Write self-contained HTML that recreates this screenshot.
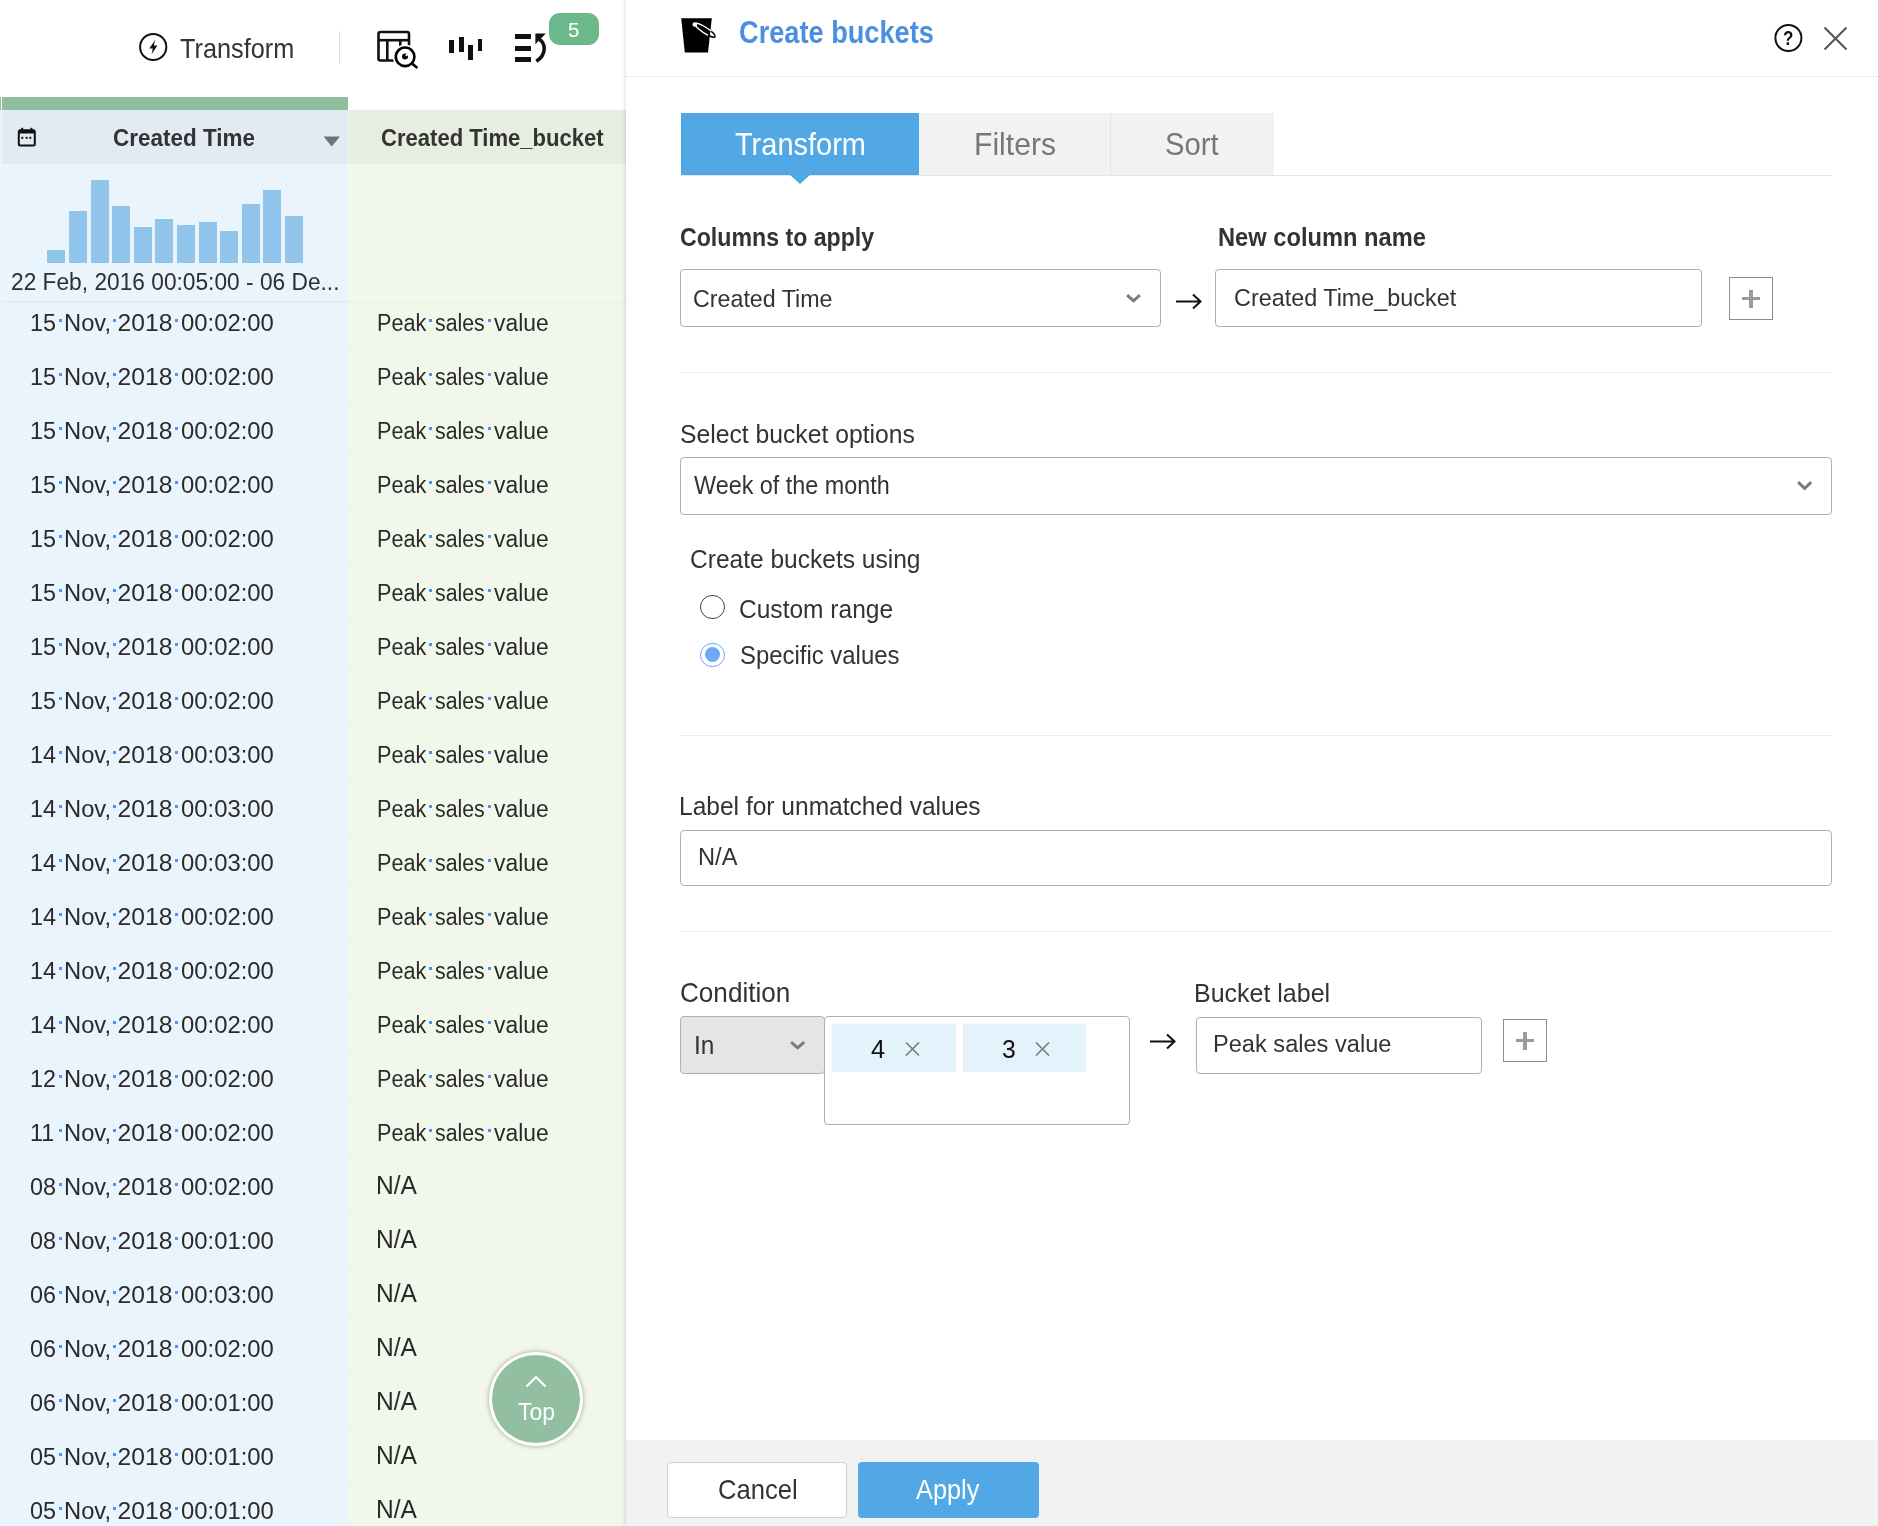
<!DOCTYPE html>
<html><head><meta charset="utf-8"><title>Create buckets</title>
<style>
html,body{margin:0;padding:0;width:1878px;height:1526px;overflow:hidden;background:#fff;position:relative;font-family:"Liberation Sans",sans-serif}
.t{position:absolute;white-space:pre;line-height:1;transform-origin:0 0}
</style></head><body>
<div style="position:absolute;left:0px;top:0px;width:626px;height:97px;background:#fff"></div>
<div style="position:absolute;left:0px;top:97px;width:2px;height:1429px;background:#f2f2f2"></div>
<div style="position:absolute;left:0px;top:97px;width:1px;height:13px;background:#8fbf9f"></div>
<div style="position:absolute;left:1px;top:97px;width:1px;height:13px;background:#fff"></div>
<div style="position:absolute;left:2px;top:97px;width:346px;height:13px;background:#8fbf9f"></div>
<div style="position:absolute;left:2px;top:110px;width:346px;height:54px;background:#e2ebf4"></div>
<div style="position:absolute;left:348px;top:110px;width:1px;height:1416px;background:#f3f5f3"></div>
<div style="position:absolute;left:349px;top:110px;width:277px;height:54px;background:#e7eddf"></div>
<div style="position:absolute;left:2px;top:164px;width:346px;height:1362px;background:#eaf4fd"></div>
<div style="position:absolute;left:349px;top:164px;width:277px;height:1362px;background:#f1f7ea"></div>
<div style="position:absolute;left:339px;top:31px;width:1px;height:33px;background:#dedede"></div>
<div style="position:absolute;left:47px;top:250px;width:18px;height:12.5px;background:#92c5ec"></div>
<div style="position:absolute;left:69px;top:211px;width:18px;height:51.5px;background:#92c5ec"></div>
<div style="position:absolute;left:91px;top:180px;width:18px;height:82.5px;background:#92c5ec"></div>
<div style="position:absolute;left:112px;top:206px;width:18px;height:56.5px;background:#92c5ec"></div>
<div style="position:absolute;left:134px;top:227px;width:18px;height:35.5px;background:#92c5ec"></div>
<div style="position:absolute;left:155px;top:219px;width:18px;height:43.5px;background:#92c5ec"></div>
<div style="position:absolute;left:177px;top:225px;width:18px;height:37.5px;background:#92c5ec"></div>
<div style="position:absolute;left:199px;top:222px;width:18px;height:40.5px;background:#92c5ec"></div>
<div style="position:absolute;left:220px;top:231px;width:18px;height:31.5px;background:#92c5ec"></div>
<div style="position:absolute;left:242px;top:204px;width:18px;height:58.5px;background:#92c5ec"></div>
<div style="position:absolute;left:263px;top:190px;width:18px;height:72.5px;background:#92c5ec"></div>
<div style="position:absolute;left:285px;top:216px;width:18px;height:46.5px;background:#92c5ec"></div>
<div style="position:absolute;left:2px;top:301px;width:346px;height:1px;background:#dde7f0"></div>
<div style="position:absolute;left:349px;top:302px;width:277px;height:1px;background:#ebedea"></div>
<div style="position:absolute;left:2px;top:346px;width:624px;height:1px;background:#f0f1f1"></div>
<div style="position:absolute;left:59px;top:318.8px;width:3px;height:3.0px;background:#4b93f2"></div>
<div style="position:absolute;left:112.5px;top:318.8px;width:3.0px;height:3.0px;background:#4b93f2"></div>
<div style="position:absolute;left:175px;top:318.8px;width:3px;height:3.0px;background:#4b93f2"></div>
<div style="position:absolute;left:429.2px;top:319.2px;width:3.0px;height:3.0px;background:#4b93f2"></div>
<div style="position:absolute;left:488px;top:319.2px;width:3px;height:3.0px;background:#4b93f2"></div>
<div style="position:absolute;left:2px;top:400px;width:624px;height:1px;background:#f0f1f1"></div>
<div style="position:absolute;left:59px;top:372.8px;width:3px;height:3.0px;background:#4b93f2"></div>
<div style="position:absolute;left:112.5px;top:372.8px;width:3.0px;height:3.0px;background:#4b93f2"></div>
<div style="position:absolute;left:175px;top:372.8px;width:3px;height:3.0px;background:#4b93f2"></div>
<div style="position:absolute;left:429.2px;top:373.2px;width:3.0px;height:3.0px;background:#4b93f2"></div>
<div style="position:absolute;left:488px;top:373.2px;width:3px;height:3.0px;background:#4b93f2"></div>
<div style="position:absolute;left:2px;top:454px;width:624px;height:1px;background:#f0f1f1"></div>
<div style="position:absolute;left:59px;top:426.8px;width:3px;height:3.0px;background:#4b93f2"></div>
<div style="position:absolute;left:112.5px;top:426.8px;width:3.0px;height:3.0px;background:#4b93f2"></div>
<div style="position:absolute;left:175px;top:426.8px;width:3px;height:3.0px;background:#4b93f2"></div>
<div style="position:absolute;left:429.2px;top:427.2px;width:3.0px;height:3.0px;background:#4b93f2"></div>
<div style="position:absolute;left:488px;top:427.2px;width:3px;height:3.0px;background:#4b93f2"></div>
<div style="position:absolute;left:2px;top:508px;width:624px;height:1px;background:#f0f1f1"></div>
<div style="position:absolute;left:59px;top:480.8px;width:3px;height:3.0px;background:#4b93f2"></div>
<div style="position:absolute;left:112.5px;top:480.8px;width:3.0px;height:3.0px;background:#4b93f2"></div>
<div style="position:absolute;left:175px;top:480.8px;width:3px;height:3.0px;background:#4b93f2"></div>
<div style="position:absolute;left:429.2px;top:481.2px;width:3.0px;height:3.0px;background:#4b93f2"></div>
<div style="position:absolute;left:488px;top:481.2px;width:3px;height:3.0px;background:#4b93f2"></div>
<div style="position:absolute;left:2px;top:562px;width:624px;height:1px;background:#f0f1f1"></div>
<div style="position:absolute;left:59px;top:534.8px;width:3px;height:3.0px;background:#4b93f2"></div>
<div style="position:absolute;left:112.5px;top:534.8px;width:3.0px;height:3.0px;background:#4b93f2"></div>
<div style="position:absolute;left:175px;top:534.8px;width:3px;height:3.0px;background:#4b93f2"></div>
<div style="position:absolute;left:429.2px;top:535.1999999999999px;width:3.0px;height:3.0px;background:#4b93f2"></div>
<div style="position:absolute;left:488px;top:535.1999999999999px;width:3px;height:3.0px;background:#4b93f2"></div>
<div style="position:absolute;left:2px;top:616px;width:624px;height:1px;background:#f0f1f1"></div>
<div style="position:absolute;left:59px;top:588.8px;width:3px;height:3.0px;background:#4b93f2"></div>
<div style="position:absolute;left:112.5px;top:588.8px;width:3.0px;height:3.0px;background:#4b93f2"></div>
<div style="position:absolute;left:175px;top:588.8px;width:3px;height:3.0px;background:#4b93f2"></div>
<div style="position:absolute;left:429.2px;top:589.1999999999999px;width:3.0px;height:3.0px;background:#4b93f2"></div>
<div style="position:absolute;left:488px;top:589.1999999999999px;width:3px;height:3.0px;background:#4b93f2"></div>
<div style="position:absolute;left:2px;top:670px;width:624px;height:1px;background:#f0f1f1"></div>
<div style="position:absolute;left:59px;top:642.8px;width:3px;height:3.0px;background:#4b93f2"></div>
<div style="position:absolute;left:112.5px;top:642.8px;width:3.0px;height:3.0px;background:#4b93f2"></div>
<div style="position:absolute;left:175px;top:642.8px;width:3px;height:3.0px;background:#4b93f2"></div>
<div style="position:absolute;left:429.2px;top:643.1999999999999px;width:3.0px;height:3.0px;background:#4b93f2"></div>
<div style="position:absolute;left:488px;top:643.1999999999999px;width:3px;height:3.0px;background:#4b93f2"></div>
<div style="position:absolute;left:2px;top:724px;width:624px;height:1px;background:#f0f1f1"></div>
<div style="position:absolute;left:59px;top:696.8px;width:3px;height:3.0px;background:#4b93f2"></div>
<div style="position:absolute;left:112.5px;top:696.8px;width:3.0px;height:3.0px;background:#4b93f2"></div>
<div style="position:absolute;left:175px;top:696.8px;width:3px;height:3.0px;background:#4b93f2"></div>
<div style="position:absolute;left:429.2px;top:697.1999999999999px;width:3.0px;height:3.0px;background:#4b93f2"></div>
<div style="position:absolute;left:488px;top:697.1999999999999px;width:3px;height:3.0px;background:#4b93f2"></div>
<div style="position:absolute;left:2px;top:778px;width:624px;height:1px;background:#f0f1f1"></div>
<div style="position:absolute;left:59px;top:750.8px;width:3px;height:3.0px;background:#4b93f2"></div>
<div style="position:absolute;left:112.5px;top:750.8px;width:3.0px;height:3.0px;background:#4b93f2"></div>
<div style="position:absolute;left:175px;top:750.8px;width:3px;height:3.0px;background:#4b93f2"></div>
<div style="position:absolute;left:429.2px;top:751.1999999999999px;width:3.0px;height:3.0px;background:#4b93f2"></div>
<div style="position:absolute;left:488px;top:751.1999999999999px;width:3px;height:3.0px;background:#4b93f2"></div>
<div style="position:absolute;left:2px;top:832px;width:624px;height:1px;background:#f0f1f1"></div>
<div style="position:absolute;left:59px;top:804.8px;width:3px;height:3.0px;background:#4b93f2"></div>
<div style="position:absolute;left:112.5px;top:804.8px;width:3.0px;height:3.0px;background:#4b93f2"></div>
<div style="position:absolute;left:175px;top:804.8px;width:3px;height:3.0px;background:#4b93f2"></div>
<div style="position:absolute;left:429.2px;top:805.1999999999999px;width:3.0px;height:3.0px;background:#4b93f2"></div>
<div style="position:absolute;left:488px;top:805.1999999999999px;width:3px;height:3.0px;background:#4b93f2"></div>
<div style="position:absolute;left:2px;top:886px;width:624px;height:1px;background:#f0f1f1"></div>
<div style="position:absolute;left:59px;top:858.8px;width:3px;height:3.0px;background:#4b93f2"></div>
<div style="position:absolute;left:112.5px;top:858.8px;width:3.0px;height:3.0px;background:#4b93f2"></div>
<div style="position:absolute;left:175px;top:858.8px;width:3px;height:3.0px;background:#4b93f2"></div>
<div style="position:absolute;left:429.2px;top:859.1999999999999px;width:3.0px;height:3.0px;background:#4b93f2"></div>
<div style="position:absolute;left:488px;top:859.1999999999999px;width:3px;height:3.0px;background:#4b93f2"></div>
<div style="position:absolute;left:2px;top:940px;width:624px;height:1px;background:#f0f1f1"></div>
<div style="position:absolute;left:59px;top:912.8px;width:3px;height:3.0px;background:#4b93f2"></div>
<div style="position:absolute;left:112.5px;top:912.8px;width:3.0px;height:3.0px;background:#4b93f2"></div>
<div style="position:absolute;left:175px;top:912.8px;width:3px;height:3.0px;background:#4b93f2"></div>
<div style="position:absolute;left:429.2px;top:913.1999999999999px;width:3.0px;height:3.0px;background:#4b93f2"></div>
<div style="position:absolute;left:488px;top:913.1999999999999px;width:3px;height:3.0px;background:#4b93f2"></div>
<div style="position:absolute;left:2px;top:994px;width:624px;height:1px;background:#f0f1f1"></div>
<div style="position:absolute;left:59px;top:966.8px;width:3px;height:3.0px;background:#4b93f2"></div>
<div style="position:absolute;left:112.5px;top:966.8px;width:3.0px;height:3.0px;background:#4b93f2"></div>
<div style="position:absolute;left:175px;top:966.8px;width:3px;height:3.0px;background:#4b93f2"></div>
<div style="position:absolute;left:429.2px;top:967.1999999999999px;width:3.0px;height:3.0px;background:#4b93f2"></div>
<div style="position:absolute;left:488px;top:967.1999999999999px;width:3px;height:3.0px;background:#4b93f2"></div>
<div style="position:absolute;left:2px;top:1048px;width:624px;height:1px;background:#f0f1f1"></div>
<div style="position:absolute;left:59px;top:1020.8px;width:3px;height:3.0px;background:#4b93f2"></div>
<div style="position:absolute;left:112.5px;top:1020.8px;width:3.0px;height:3.0px;background:#4b93f2"></div>
<div style="position:absolute;left:175px;top:1020.8px;width:3px;height:3.0px;background:#4b93f2"></div>
<div style="position:absolute;left:429.2px;top:1021.1999999999999px;width:3.0px;height:3.0000000000001137px;background:#4b93f2"></div>
<div style="position:absolute;left:488px;top:1021.1999999999999px;width:3px;height:3.0000000000001137px;background:#4b93f2"></div>
<div style="position:absolute;left:2px;top:1102px;width:624px;height:1px;background:#f0f1f1"></div>
<div style="position:absolute;left:59px;top:1074.8px;width:3px;height:3.0px;background:#4b93f2"></div>
<div style="position:absolute;left:112.5px;top:1074.8px;width:3.0px;height:3.0px;background:#4b93f2"></div>
<div style="position:absolute;left:175px;top:1074.8px;width:3px;height:3.0px;background:#4b93f2"></div>
<div style="position:absolute;left:429.2px;top:1075.2px;width:3.0px;height:3.0px;background:#4b93f2"></div>
<div style="position:absolute;left:488px;top:1075.2px;width:3px;height:3.0px;background:#4b93f2"></div>
<div style="position:absolute;left:2px;top:1156px;width:624px;height:1px;background:#f0f1f1"></div>
<div style="position:absolute;left:59px;top:1128.8px;width:3px;height:3.0px;background:#4b93f2"></div>
<div style="position:absolute;left:112.5px;top:1128.8px;width:3.0px;height:3.0px;background:#4b93f2"></div>
<div style="position:absolute;left:175px;top:1128.8px;width:3px;height:3.0px;background:#4b93f2"></div>
<div style="position:absolute;left:429.2px;top:1129.2px;width:3.0px;height:3.0px;background:#4b93f2"></div>
<div style="position:absolute;left:488px;top:1129.2px;width:3px;height:3.0px;background:#4b93f2"></div>
<div style="position:absolute;left:2px;top:1210px;width:624px;height:1px;background:#f0f1f1"></div>
<div style="position:absolute;left:59px;top:1182.8px;width:3px;height:3.0px;background:#4b93f2"></div>
<div style="position:absolute;left:112.5px;top:1182.8px;width:3.0px;height:3.0px;background:#4b93f2"></div>
<div style="position:absolute;left:175px;top:1182.8px;width:3px;height:3.0px;background:#4b93f2"></div>
<div style="position:absolute;left:2px;top:1264px;width:624px;height:1px;background:#f0f1f1"></div>
<div style="position:absolute;left:59px;top:1236.8px;width:3px;height:3.0px;background:#4b93f2"></div>
<div style="position:absolute;left:112.5px;top:1236.8px;width:3.0px;height:3.0px;background:#4b93f2"></div>
<div style="position:absolute;left:175px;top:1236.8px;width:3px;height:3.0px;background:#4b93f2"></div>
<div style="position:absolute;left:2px;top:1318px;width:624px;height:1px;background:#f0f1f1"></div>
<div style="position:absolute;left:59px;top:1290.8px;width:3px;height:3.0px;background:#4b93f2"></div>
<div style="position:absolute;left:112.5px;top:1290.8px;width:3.0px;height:3.0px;background:#4b93f2"></div>
<div style="position:absolute;left:175px;top:1290.8px;width:3px;height:3.0px;background:#4b93f2"></div>
<div style="position:absolute;left:2px;top:1372px;width:624px;height:1px;background:#f0f1f1"></div>
<div style="position:absolute;left:59px;top:1344.8px;width:3px;height:3.0px;background:#4b93f2"></div>
<div style="position:absolute;left:112.5px;top:1344.8px;width:3.0px;height:3.0px;background:#4b93f2"></div>
<div style="position:absolute;left:175px;top:1344.8px;width:3px;height:3.0px;background:#4b93f2"></div>
<div style="position:absolute;left:2px;top:1426px;width:624px;height:1px;background:#f0f1f1"></div>
<div style="position:absolute;left:59px;top:1398.8px;width:3px;height:3.0px;background:#4b93f2"></div>
<div style="position:absolute;left:112.5px;top:1398.8px;width:3.0px;height:3.0px;background:#4b93f2"></div>
<div style="position:absolute;left:175px;top:1398.8px;width:3px;height:3.0px;background:#4b93f2"></div>
<div style="position:absolute;left:2px;top:1480px;width:624px;height:1px;background:#f0f1f1"></div>
<div style="position:absolute;left:59px;top:1452.8px;width:3px;height:3.0px;background:#4b93f2"></div>
<div style="position:absolute;left:112.5px;top:1452.8px;width:3.0px;height:3.0px;background:#4b93f2"></div>
<div style="position:absolute;left:175px;top:1452.8px;width:3px;height:3.0px;background:#4b93f2"></div>
<div style="position:absolute;left:59px;top:1506.8px;width:3px;height:3.0px;background:#4b93f2"></div>
<div style="position:absolute;left:112.5px;top:1506.8px;width:3.0px;height:3.0px;background:#4b93f2"></div>
<div style="position:absolute;left:175px;top:1506.8px;width:3px;height:3.0px;background:#4b93f2"></div>
<div style="position:absolute;left:626px;top:0;width:1252px;height:1526px;background:#fff;box-shadow:-1px 0 4px rgba(0,0,0,0.14)"></div>
<div style="position:absolute;left:626px;top:1440px;width:1252px;height:86px;background:#f2f2f2"></div>
<div style="position:absolute;left:626px;top:76px;width:1252px;height:1px;border-top:1px dotted #d9d9d9;height:0"></div>
<div style="position:absolute;left:681px;top:113px;width:238px;height:62px;background:#52a8e4"></div>
<div style="position:absolute;left:919px;top:113px;width:355px;height:62px;background:#f2f2f2"></div>
<div style="position:absolute;left:1110px;top:113px;width:1px;height:62px;background:#e3e3e3"></div>
<div style="position:absolute;left:681px;top:175px;width:1150px;height:1px;background:#e6e6e6"></div>
<svg style="position:absolute;left:790px;top:175px" width="20" height="10"><polygon points="0,0 20,0 10,9" fill="#52a8e4"/></svg>
<div style="position:absolute;left:680px;top:269px;width:481px;height:58px;box-sizing:border-box;border:1.5px solid #b0b0b0;border-radius:4px;background:#fff"></div>
<svg style="position:absolute;left:1126px;top:294px;overflow:visible" width="15" height="9"><polyline points="1.1,1.1 7.5,6.9 13.9,1.1" fill="none" stroke="#7a7a7a" stroke-width="2.9"/></svg>
<svg style="position:absolute;left:1175.5px;top:293.5px;overflow:visible" width="25.5" height="15.0"><path d="M0,7.5 H24.5 M17.0,0.5 L24.5,7.5 L17.0,14.5" fill="none" stroke="#111" stroke-width="2"/></svg>
<div style="position:absolute;left:1215px;top:269px;width:487px;height:58px;box-sizing:border-box;border:1.5px solid #b0b0b0;border-radius:4px;background:#fff"></div>
<div style="position:absolute;left:1729px;top:277px;width:44px;height:43px;box-sizing:border-box;border:1.5px solid #8c8c8c;background:#fff"></div>
<div style="position:absolute;left:1742.0px;top:296.75px;width:18.0px;height:3.5px;background:#9a9a9a"></div>
<div style="position:absolute;left:1749.25px;top:289.5px;width:3.5px;height:18.0px;background:#9a9a9a"></div>
<div style="position:absolute;left:680px;top:372px;width:1151px;height:1px;border-top:1px dotted #d9d9d9;height:0"></div>
<div style="position:absolute;left:680px;top:457px;width:1152px;height:58px;box-sizing:border-box;border:1.5px solid #b0b0b0;border-radius:4px;background:#fff"></div>
<svg style="position:absolute;left:1797px;top:481px;overflow:visible" width="15.299999999999955" height="9.5"><polyline points="1.1,1.1 7.649999999999977,7.4 14.199999999999955,1.1" fill="none" stroke="#7a7a7a" stroke-width="2.9"/></svg>
<div style="position:absolute;left:700px;top:594.5px;width:24.5px;height:24.5px;box-sizing:border-box;border:1.3px solid #444;border-radius:50%;background:#fff"></div>
<div style="position:absolute;left:700px;top:642.5px;width:24.5px;height:24.5px;box-sizing:border-box;border:1.3px solid #6aa8f8;border-radius:50%;background:#fff"></div>
<div style="position:absolute;left:705px;top:647.2px;width:15px;height:15px;border-radius:50%;background:#6ea9f7"></div>
<div style="position:absolute;left:680px;top:735px;width:1151px;height:1px;border-top:1px dotted #d9d9d9;height:0"></div>
<div style="position:absolute;left:680px;top:829.5px;width:1152px;height:56.0px;box-sizing:border-box;border:1.5px solid #b0b0b0;border-radius:4px;background:#fff"></div>
<div style="position:absolute;left:680px;top:931px;width:1151px;height:1px;border-top:1px dotted #d9d9d9;height:0"></div>
<div style="position:absolute;left:680px;top:1016px;width:145px;height:57.5px;box-sizing:border-box;border:1.5px solid #b0b0b0;border-radius:4px;background:#e5e5e5"></div>
<svg style="position:absolute;left:790px;top:1041px;overflow:visible" width="15.299999999999955" height="9"><polyline points="1.1,1.1 7.649999999999977,6.9 14.199999999999955,1.1" fill="none" stroke="#7a7a7a" stroke-width="2.9"/></svg>
<div style="position:absolute;left:824px;top:1016px;width:306px;height:108.5px;box-sizing:border-box;border:1.5px solid #b0b0b0;border-radius:4px;background:#fff"></div>
<div style="position:absolute;left:832px;top:1024px;width:124px;height:48px;background:#e4f2fc"></div>
<div style="position:absolute;left:963px;top:1024px;width:123px;height:48px;background:#e4f2fc"></div>
<svg style="position:absolute;left:905px;top:1041.5px" width="15" height="14"><path d="M1,0.5 L14,13.5 M14,0.5 L1,13.5" stroke="#7c7c7c" stroke-width="1.6" fill="none"/></svg>
<svg style="position:absolute;left:1035px;top:1041.5px" width="15" height="14"><path d="M1,0.5 L14,13.5 M14,0.5 L1,13.5" stroke="#7c7c7c" stroke-width="1.6" fill="none"/></svg>
<svg style="position:absolute;left:1149.5px;top:1033.5px;overflow:visible" width="25.5" height="15.0"><path d="M0,7.5 H24.5 M17.0,0.5 L24.5,7.5 L17.0,14.5" fill="none" stroke="#111" stroke-width="2"/></svg>
<div style="position:absolute;left:1195.5px;top:1016.5px;width:286.0px;height:57.0px;box-sizing:border-box;border:1.5px solid #b0b0b0;border-radius:4px;background:#fff"></div>
<div style="position:absolute;left:1503px;top:1019px;width:44px;height:43px;box-sizing:border-box;border:1.5px solid #8c8c8c;background:#fff"></div>
<div style="position:absolute;left:1516.0px;top:1038.75px;width:18.0px;height:3.5px;background:#9a9a9a"></div>
<div style="position:absolute;left:1523.25px;top:1031.5px;width:3.5px;height:18.0px;background:#9a9a9a"></div>
<div style="position:absolute;left:667px;top:1462px;width:180px;height:55.5px;box-sizing:border-box;border:1px solid #cfcfcf;border-radius:4px;background:#fff"></div>
<div style="position:absolute;left:858px;top:1462px;width:180.5px;height:55.5px;border-radius:4px;background:#52a8e4"></div>
<svg style="position:absolute;left:1770px;top:20px" width="100" height="40"><circle cx="18.4" cy="18" r="13" fill="none" stroke="#111" stroke-width="2"/><path d="M54.5,7.5 L76.5,29.5 M76.5,7.5 L54.5,29.5" stroke="#555" stroke-width="2.1" fill="none"/></svg>
<svg style="position:absolute;left:678px;top:15px;overflow:visible" width="45" height="42"><defs><clipPath id="bk"><polygon points="3.2,3.3 33.8,3.3 30,37.5 6.8,37.5"/></clipPath></defs><polygon points="3.2,3.3 33.8,3.3 30,37.5 6.8,37.5" fill="#000"/><ellipse cx="27" cy="15.2" rx="12" ry="2.9" transform="rotate(33 27 15.2)" fill="none" stroke="#000" stroke-width="1.5"/><ellipse cx="27" cy="15.2" rx="12" ry="2.9" transform="rotate(33 27 15.2)" fill="none" stroke="#fff" stroke-width="1.3" clip-path="url(#bk)"/><circle cx="16.8" cy="9.5" r="2.3" fill="#fff"/></svg>
<svg style="position:absolute;left:130px;top:25px" width="50" height="50"><circle cx="23.2" cy="22" r="13.1" fill="none" stroke="#111" stroke-width="2"/><polygon points="25.3,15 19.2,23.4 22.8,23.4 21.6,29.2 27.4,20.6 23.8,20.6" fill="#111"/></svg>
<svg style="position:absolute;left:370px;top:25px;overflow:visible" width="60" height="50"><rect x="8.5" y="7" width="30.5" height="28.5" rx="2" fill="none" stroke="#111" stroke-width="2.6"/><line x1="8.5" y1="15.2" x2="39" y2="15.2" stroke="#111" stroke-width="2.6"/><line x1="17.3" y1="15" x2="17.3" y2="35.5" stroke="#111" stroke-width="2.6"/><line x1="30.3" y1="15" x2="30.3" y2="22" stroke="#111" stroke-width="2.6"/><circle cx="35.1" cy="31.8" r="12.3" fill="#fff"/><circle cx="35.1" cy="31.8" r="9.3" fill="none" stroke="#000" stroke-width="2.6"/><circle cx="35" cy="31.5" r="3" fill="#000"/><circle cx="36.6" cy="30.2" r="1.1" fill="#fff"/><line x1="42.2" y1="38.7" x2="46.5" y2="42.3" stroke="#000" stroke-width="2.7" stroke-linecap="round"/></svg>
<div style="position:absolute;left:449.3px;top:40.1px;width:4.800000000000011px;height:12.5px;background:#111"></div>
<div style="position:absolute;left:459.3px;top:37.1px;width:4.5px;height:15.199999999999996px;background:#111"></div>
<div style="position:absolute;left:468.3px;top:45px;width:4.5px;height:14.799999999999997px;background:#111"></div>
<div style="position:absolute;left:478.1px;top:39px;width:4.399999999999977px;height:12px;background:#111"></div>
<div style="position:absolute;left:514.6px;top:33.6px;width:16.399999999999977px;height:5.199999999999996px;background:#111"></div>
<div style="position:absolute;left:514.6px;top:45.7px;width:16.399999999999977px;height:5.099999999999994px;background:#111"></div>
<div style="position:absolute;left:514.6px;top:56.8px;width:16.399999999999977px;height:5.5px;background:#111"></div>
<svg style="position:absolute;left:530px;top:30px;overflow:visible" width="20" height="36"><path d="M9.2,9.2 C15.5,13 17.2,24.5 6.3,31.3" fill="none" stroke="#111" stroke-width="3.5"/><polygon points="5.4,3.4 15.8,3.4 5.4,14.2" fill="#111"/></svg>
<div style="position:absolute;left:549px;top:13px;width:50px;height:32px;background:#6bb98a;border-radius:11px"></div>
<svg style="position:absolute;left:15px;top:125px" width="24" height="24"><rect x="3.8" y="5.5" width="16" height="15" rx="1.5" fill="none" stroke="#111" stroke-width="2"/><rect x="3.8" y="4.5" width="16" height="4" fill="#111"/><rect x="6.2" y="2.8" width="2" height="3" fill="#111"/><rect x="15.4" y="2.8" width="2" height="3" fill="#111"/><rect x="6.3" y="11.8" width="2" height="2" fill="#111"/><rect x="10.6" y="11.8" width="2" height="2" fill="#111"/><rect x="14.3" y="11.8" width="2" height="2" fill="#111"/></svg>
<svg style="position:absolute;left:323px;top:135.5px" width="18" height="11"><polygon points="0.5,0.5 17,0.5 8.75,10.5" fill="#6e7378"/></svg>
<div style="position:absolute;left:489px;top:1352px;width:94px;height:94px;border-radius:50%;background:#fff;box-shadow:0 0 5px rgba(0,0,0,0.35)"></div>
<div style="position:absolute;left:492.2px;top:1355.2px;width:87.6px;height:87.6px;border-radius:50%;background:#92bea2"></div>
<svg style="position:absolute;left:520px;top:1370px" width="32" height="24"><polyline points="6.5,16.5 16,7 25.5,16.5" fill="none" stroke="#fff" stroke-width="2.2"/></svg>
<div id="tx" style="position:absolute;left:0;top:0;width:1878px;height:1526px;will-change:transform">
<div class="t" style="left:180.31px;top:34.59px;font-size:27.54px;font-weight:400;color:#333;transform:scaleX(0.9178);">Transform</div>
<div class="t" style="left:10.53px;top:269.60px;font-size:23.77px;font-weight:400;color:#2e2e2e;transform:scaleX(0.9562);">22 Feb, 2016 00:05:00 - 06 De...</div>
<div class="t" style="left:112.80px;top:125.50px;font-size:24.35px;font-weight:700;color:#333;transform:scaleX(0.9229);">Created Time</div>
<div class="t" style="left:381.11px;top:125.76px;font-size:24.64px;font-weight:700;color:#333;transform:scaleX(0.8956);">Created Time_bucket</div>
<div class="t" style="left:29.54px;top:310.56px;font-size:24.64px;font-weight:400;color:#2a2a2a;transform:scaleX(0.9491)">15</div>
<div class="t" style="left:63.95px;top:310.56px;font-size:24.64px;font-weight:400;color:#2a2a2a;transform:scaleX(0.9631);">Nov,</div>
<div class="t" style="left:117.55px;top:310.56px;font-size:24.64px;font-weight:400;color:#2a2a2a;">2018</div>
<div class="t" style="left:180.65px;top:310.56px;font-size:24.64px;font-weight:400;color:#2a2a2a;transform:scaleX(0.9691);">00:02:00</div>
<div class="t" style="left:376.61px;top:310.80px;font-size:24.35px;font-weight:400;color:#2a2a2a;transform:scaleX(0.8875);">Peak</div>
<div class="t" style="left:435.27px;top:310.80px;font-size:24.35px;font-weight:400;color:#2a2a2a;transform:scaleX(0.8744);">sales</div>
<div class="t" style="left:493.90px;top:310.80px;font-size:24.35px;font-weight:400;color:#2a2a2a;transform:scaleX(0.9385);">value</div>
<div class="t" style="left:29.54px;top:364.56px;font-size:24.64px;font-weight:400;color:#2a2a2a;transform:scaleX(0.9491)">15</div>
<div class="t" style="left:63.95px;top:364.56px;font-size:24.64px;font-weight:400;color:#2a2a2a;transform:scaleX(0.9631);">Nov,</div>
<div class="t" style="left:117.55px;top:364.56px;font-size:24.64px;font-weight:400;color:#2a2a2a;">2018</div>
<div class="t" style="left:180.65px;top:364.56px;font-size:24.64px;font-weight:400;color:#2a2a2a;transform:scaleX(0.9691);">00:02:00</div>
<div class="t" style="left:376.61px;top:364.80px;font-size:24.35px;font-weight:400;color:#2a2a2a;transform:scaleX(0.8875);">Peak</div>
<div class="t" style="left:435.27px;top:364.80px;font-size:24.35px;font-weight:400;color:#2a2a2a;transform:scaleX(0.8744);">sales</div>
<div class="t" style="left:493.90px;top:364.80px;font-size:24.35px;font-weight:400;color:#2a2a2a;transform:scaleX(0.9385);">value</div>
<div class="t" style="left:29.54px;top:418.56px;font-size:24.64px;font-weight:400;color:#2a2a2a;transform:scaleX(0.9491)">15</div>
<div class="t" style="left:63.95px;top:418.56px;font-size:24.64px;font-weight:400;color:#2a2a2a;transform:scaleX(0.9631);">Nov,</div>
<div class="t" style="left:117.55px;top:418.56px;font-size:24.64px;font-weight:400;color:#2a2a2a;">2018</div>
<div class="t" style="left:180.65px;top:418.56px;font-size:24.64px;font-weight:400;color:#2a2a2a;transform:scaleX(0.9691);">00:02:00</div>
<div class="t" style="left:376.61px;top:418.80px;font-size:24.35px;font-weight:400;color:#2a2a2a;transform:scaleX(0.8875);">Peak</div>
<div class="t" style="left:435.27px;top:418.80px;font-size:24.35px;font-weight:400;color:#2a2a2a;transform:scaleX(0.8744);">sales</div>
<div class="t" style="left:493.90px;top:418.80px;font-size:24.35px;font-weight:400;color:#2a2a2a;transform:scaleX(0.9385);">value</div>
<div class="t" style="left:29.54px;top:472.56px;font-size:24.64px;font-weight:400;color:#2a2a2a;transform:scaleX(0.9491)">15</div>
<div class="t" style="left:63.95px;top:472.56px;font-size:24.64px;font-weight:400;color:#2a2a2a;transform:scaleX(0.9631);">Nov,</div>
<div class="t" style="left:117.55px;top:472.56px;font-size:24.64px;font-weight:400;color:#2a2a2a;">2018</div>
<div class="t" style="left:180.65px;top:472.56px;font-size:24.64px;font-weight:400;color:#2a2a2a;transform:scaleX(0.9691);">00:02:00</div>
<div class="t" style="left:376.61px;top:472.80px;font-size:24.35px;font-weight:400;color:#2a2a2a;transform:scaleX(0.8875);">Peak</div>
<div class="t" style="left:435.27px;top:472.80px;font-size:24.35px;font-weight:400;color:#2a2a2a;transform:scaleX(0.8744);">sales</div>
<div class="t" style="left:493.90px;top:472.80px;font-size:24.35px;font-weight:400;color:#2a2a2a;transform:scaleX(0.9385);">value</div>
<div class="t" style="left:29.54px;top:526.56px;font-size:24.64px;font-weight:400;color:#2a2a2a;transform:scaleX(0.9491)">15</div>
<div class="t" style="left:63.95px;top:526.56px;font-size:24.64px;font-weight:400;color:#2a2a2a;transform:scaleX(0.9631);">Nov,</div>
<div class="t" style="left:117.55px;top:526.56px;font-size:24.64px;font-weight:400;color:#2a2a2a;">2018</div>
<div class="t" style="left:180.65px;top:526.56px;font-size:24.64px;font-weight:400;color:#2a2a2a;transform:scaleX(0.9691);">00:02:00</div>
<div class="t" style="left:376.61px;top:526.80px;font-size:24.35px;font-weight:400;color:#2a2a2a;transform:scaleX(0.8875);">Peak</div>
<div class="t" style="left:435.27px;top:526.80px;font-size:24.35px;font-weight:400;color:#2a2a2a;transform:scaleX(0.8744);">sales</div>
<div class="t" style="left:493.90px;top:526.80px;font-size:24.35px;font-weight:400;color:#2a2a2a;transform:scaleX(0.9385);">value</div>
<div class="t" style="left:29.54px;top:580.56px;font-size:24.64px;font-weight:400;color:#2a2a2a;transform:scaleX(0.9491)">15</div>
<div class="t" style="left:63.95px;top:580.56px;font-size:24.64px;font-weight:400;color:#2a2a2a;transform:scaleX(0.9631);">Nov,</div>
<div class="t" style="left:117.55px;top:580.56px;font-size:24.64px;font-weight:400;color:#2a2a2a;">2018</div>
<div class="t" style="left:180.65px;top:580.56px;font-size:24.64px;font-weight:400;color:#2a2a2a;transform:scaleX(0.9691);">00:02:00</div>
<div class="t" style="left:376.61px;top:580.80px;font-size:24.35px;font-weight:400;color:#2a2a2a;transform:scaleX(0.8875);">Peak</div>
<div class="t" style="left:435.27px;top:580.80px;font-size:24.35px;font-weight:400;color:#2a2a2a;transform:scaleX(0.8744);">sales</div>
<div class="t" style="left:493.90px;top:580.80px;font-size:24.35px;font-weight:400;color:#2a2a2a;transform:scaleX(0.9385);">value</div>
<div class="t" style="left:29.54px;top:634.56px;font-size:24.64px;font-weight:400;color:#2a2a2a;transform:scaleX(0.9491)">15</div>
<div class="t" style="left:63.95px;top:634.56px;font-size:24.64px;font-weight:400;color:#2a2a2a;transform:scaleX(0.9631);">Nov,</div>
<div class="t" style="left:117.55px;top:634.56px;font-size:24.64px;font-weight:400;color:#2a2a2a;">2018</div>
<div class="t" style="left:180.65px;top:634.56px;font-size:24.64px;font-weight:400;color:#2a2a2a;transform:scaleX(0.9691);">00:02:00</div>
<div class="t" style="left:376.61px;top:634.80px;font-size:24.35px;font-weight:400;color:#2a2a2a;transform:scaleX(0.8875);">Peak</div>
<div class="t" style="left:435.27px;top:634.80px;font-size:24.35px;font-weight:400;color:#2a2a2a;transform:scaleX(0.8744);">sales</div>
<div class="t" style="left:493.90px;top:634.80px;font-size:24.35px;font-weight:400;color:#2a2a2a;transform:scaleX(0.9385);">value</div>
<div class="t" style="left:29.54px;top:688.56px;font-size:24.64px;font-weight:400;color:#2a2a2a;transform:scaleX(0.9491)">15</div>
<div class="t" style="left:63.95px;top:688.56px;font-size:24.64px;font-weight:400;color:#2a2a2a;transform:scaleX(0.9631);">Nov,</div>
<div class="t" style="left:117.55px;top:688.56px;font-size:24.64px;font-weight:400;color:#2a2a2a;">2018</div>
<div class="t" style="left:180.65px;top:688.56px;font-size:24.64px;font-weight:400;color:#2a2a2a;transform:scaleX(0.9691);">00:02:00</div>
<div class="t" style="left:376.61px;top:688.80px;font-size:24.35px;font-weight:400;color:#2a2a2a;transform:scaleX(0.8875);">Peak</div>
<div class="t" style="left:435.27px;top:688.80px;font-size:24.35px;font-weight:400;color:#2a2a2a;transform:scaleX(0.8744);">sales</div>
<div class="t" style="left:493.90px;top:688.80px;font-size:24.35px;font-weight:400;color:#2a2a2a;transform:scaleX(0.9385);">value</div>
<div class="t" style="left:29.54px;top:742.56px;font-size:24.64px;font-weight:400;color:#2a2a2a;transform:scaleX(0.9491)">14</div>
<div class="t" style="left:63.95px;top:742.56px;font-size:24.64px;font-weight:400;color:#2a2a2a;transform:scaleX(0.9631);">Nov,</div>
<div class="t" style="left:117.55px;top:742.56px;font-size:24.64px;font-weight:400;color:#2a2a2a;">2018</div>
<div class="t" style="left:180.65px;top:742.56px;font-size:24.64px;font-weight:400;color:#2a2a2a;transform:scaleX(0.9691);">00:03:00</div>
<div class="t" style="left:376.61px;top:742.80px;font-size:24.35px;font-weight:400;color:#2a2a2a;transform:scaleX(0.8875);">Peak</div>
<div class="t" style="left:435.27px;top:742.80px;font-size:24.35px;font-weight:400;color:#2a2a2a;transform:scaleX(0.8744);">sales</div>
<div class="t" style="left:493.90px;top:742.80px;font-size:24.35px;font-weight:400;color:#2a2a2a;transform:scaleX(0.9385);">value</div>
<div class="t" style="left:29.54px;top:796.56px;font-size:24.64px;font-weight:400;color:#2a2a2a;transform:scaleX(0.9491)">14</div>
<div class="t" style="left:63.95px;top:796.56px;font-size:24.64px;font-weight:400;color:#2a2a2a;transform:scaleX(0.9631);">Nov,</div>
<div class="t" style="left:117.55px;top:796.56px;font-size:24.64px;font-weight:400;color:#2a2a2a;">2018</div>
<div class="t" style="left:180.65px;top:796.56px;font-size:24.64px;font-weight:400;color:#2a2a2a;transform:scaleX(0.9691);">00:03:00</div>
<div class="t" style="left:376.61px;top:796.80px;font-size:24.35px;font-weight:400;color:#2a2a2a;transform:scaleX(0.8875);">Peak</div>
<div class="t" style="left:435.27px;top:796.80px;font-size:24.35px;font-weight:400;color:#2a2a2a;transform:scaleX(0.8744);">sales</div>
<div class="t" style="left:493.90px;top:796.80px;font-size:24.35px;font-weight:400;color:#2a2a2a;transform:scaleX(0.9385);">value</div>
<div class="t" style="left:29.54px;top:850.56px;font-size:24.64px;font-weight:400;color:#2a2a2a;transform:scaleX(0.9491)">14</div>
<div class="t" style="left:63.95px;top:850.56px;font-size:24.64px;font-weight:400;color:#2a2a2a;transform:scaleX(0.9631);">Nov,</div>
<div class="t" style="left:117.55px;top:850.56px;font-size:24.64px;font-weight:400;color:#2a2a2a;">2018</div>
<div class="t" style="left:180.65px;top:850.56px;font-size:24.64px;font-weight:400;color:#2a2a2a;transform:scaleX(0.9691);">00:03:00</div>
<div class="t" style="left:376.61px;top:850.80px;font-size:24.35px;font-weight:400;color:#2a2a2a;transform:scaleX(0.8875);">Peak</div>
<div class="t" style="left:435.27px;top:850.80px;font-size:24.35px;font-weight:400;color:#2a2a2a;transform:scaleX(0.8744);">sales</div>
<div class="t" style="left:493.90px;top:850.80px;font-size:24.35px;font-weight:400;color:#2a2a2a;transform:scaleX(0.9385);">value</div>
<div class="t" style="left:29.54px;top:904.56px;font-size:24.64px;font-weight:400;color:#2a2a2a;transform:scaleX(0.9491)">14</div>
<div class="t" style="left:63.95px;top:904.56px;font-size:24.64px;font-weight:400;color:#2a2a2a;transform:scaleX(0.9631);">Nov,</div>
<div class="t" style="left:117.55px;top:904.56px;font-size:24.64px;font-weight:400;color:#2a2a2a;">2018</div>
<div class="t" style="left:180.65px;top:904.56px;font-size:24.64px;font-weight:400;color:#2a2a2a;transform:scaleX(0.9691);">00:02:00</div>
<div class="t" style="left:376.61px;top:904.80px;font-size:24.35px;font-weight:400;color:#2a2a2a;transform:scaleX(0.8875);">Peak</div>
<div class="t" style="left:435.27px;top:904.80px;font-size:24.35px;font-weight:400;color:#2a2a2a;transform:scaleX(0.8744);">sales</div>
<div class="t" style="left:493.90px;top:904.80px;font-size:24.35px;font-weight:400;color:#2a2a2a;transform:scaleX(0.9385);">value</div>
<div class="t" style="left:29.54px;top:958.56px;font-size:24.64px;font-weight:400;color:#2a2a2a;transform:scaleX(0.9491)">14</div>
<div class="t" style="left:63.95px;top:958.56px;font-size:24.64px;font-weight:400;color:#2a2a2a;transform:scaleX(0.9631);">Nov,</div>
<div class="t" style="left:117.55px;top:958.56px;font-size:24.64px;font-weight:400;color:#2a2a2a;">2018</div>
<div class="t" style="left:180.65px;top:958.56px;font-size:24.64px;font-weight:400;color:#2a2a2a;transform:scaleX(0.9691);">00:02:00</div>
<div class="t" style="left:376.61px;top:958.80px;font-size:24.35px;font-weight:400;color:#2a2a2a;transform:scaleX(0.8875);">Peak</div>
<div class="t" style="left:435.27px;top:958.80px;font-size:24.35px;font-weight:400;color:#2a2a2a;transform:scaleX(0.8744);">sales</div>
<div class="t" style="left:493.90px;top:958.80px;font-size:24.35px;font-weight:400;color:#2a2a2a;transform:scaleX(0.9385);">value</div>
<div class="t" style="left:29.54px;top:1012.56px;font-size:24.64px;font-weight:400;color:#2a2a2a;transform:scaleX(0.9491)">14</div>
<div class="t" style="left:63.95px;top:1012.56px;font-size:24.64px;font-weight:400;color:#2a2a2a;transform:scaleX(0.9631);">Nov,</div>
<div class="t" style="left:117.55px;top:1012.56px;font-size:24.64px;font-weight:400;color:#2a2a2a;">2018</div>
<div class="t" style="left:180.65px;top:1012.56px;font-size:24.64px;font-weight:400;color:#2a2a2a;transform:scaleX(0.9691);">00:02:00</div>
<div class="t" style="left:376.61px;top:1012.80px;font-size:24.35px;font-weight:400;color:#2a2a2a;transform:scaleX(0.8875);">Peak</div>
<div class="t" style="left:435.27px;top:1012.80px;font-size:24.35px;font-weight:400;color:#2a2a2a;transform:scaleX(0.8744);">sales</div>
<div class="t" style="left:493.90px;top:1012.80px;font-size:24.35px;font-weight:400;color:#2a2a2a;transform:scaleX(0.9385);">value</div>
<div class="t" style="left:29.54px;top:1066.56px;font-size:24.64px;font-weight:400;color:#2a2a2a;transform:scaleX(0.9491)">12</div>
<div class="t" style="left:63.95px;top:1066.56px;font-size:24.64px;font-weight:400;color:#2a2a2a;transform:scaleX(0.9631);">Nov,</div>
<div class="t" style="left:117.55px;top:1066.56px;font-size:24.64px;font-weight:400;color:#2a2a2a;">2018</div>
<div class="t" style="left:180.65px;top:1066.56px;font-size:24.64px;font-weight:400;color:#2a2a2a;transform:scaleX(0.9691);">00:02:00</div>
<div class="t" style="left:376.61px;top:1066.80px;font-size:24.35px;font-weight:400;color:#2a2a2a;transform:scaleX(0.8875);">Peak</div>
<div class="t" style="left:435.27px;top:1066.80px;font-size:24.35px;font-weight:400;color:#2a2a2a;transform:scaleX(0.8744);">sales</div>
<div class="t" style="left:493.90px;top:1066.80px;font-size:24.35px;font-weight:400;color:#2a2a2a;transform:scaleX(0.9385);">value</div>
<div class="t" style="left:29.54px;top:1120.56px;font-size:24.64px;font-weight:400;color:#2a2a2a;transform:scaleX(0.9491)">11</div>
<div class="t" style="left:63.95px;top:1120.56px;font-size:24.64px;font-weight:400;color:#2a2a2a;transform:scaleX(0.9631);">Nov,</div>
<div class="t" style="left:117.55px;top:1120.56px;font-size:24.64px;font-weight:400;color:#2a2a2a;">2018</div>
<div class="t" style="left:180.65px;top:1120.56px;font-size:24.64px;font-weight:400;color:#2a2a2a;transform:scaleX(0.9691);">00:02:00</div>
<div class="t" style="left:376.61px;top:1120.80px;font-size:24.35px;font-weight:400;color:#2a2a2a;transform:scaleX(0.8875);">Peak</div>
<div class="t" style="left:435.27px;top:1120.80px;font-size:24.35px;font-weight:400;color:#2a2a2a;transform:scaleX(0.8744);">sales</div>
<div class="t" style="left:493.90px;top:1120.80px;font-size:24.35px;font-weight:400;color:#2a2a2a;transform:scaleX(0.9385);">value</div>
<div class="t" style="left:29.54px;top:1174.56px;font-size:24.64px;font-weight:400;color:#2a2a2a;transform:scaleX(0.9491)">08</div>
<div class="t" style="left:63.95px;top:1174.56px;font-size:24.64px;font-weight:400;color:#2a2a2a;transform:scaleX(0.9631);">Nov,</div>
<div class="t" style="left:117.55px;top:1174.56px;font-size:24.64px;font-weight:400;color:#2a2a2a;">2018</div>
<div class="t" style="left:180.65px;top:1174.56px;font-size:24.64px;font-weight:400;color:#2a2a2a;transform:scaleX(0.9691);">00:02:00</div>
<div class="t" style="left:375.88px;top:1172.71px;font-size:24.93px;font-weight:400;color:#2a2a2a;transform:scaleX(0.9842);">N/A</div>
<div class="t" style="left:29.54px;top:1228.56px;font-size:24.64px;font-weight:400;color:#2a2a2a;transform:scaleX(0.9491)">08</div>
<div class="t" style="left:63.95px;top:1228.56px;font-size:24.64px;font-weight:400;color:#2a2a2a;transform:scaleX(0.9631);">Nov,</div>
<div class="t" style="left:117.55px;top:1228.56px;font-size:24.64px;font-weight:400;color:#2a2a2a;">2018</div>
<div class="t" style="left:180.65px;top:1228.56px;font-size:24.64px;font-weight:400;color:#2a2a2a;transform:scaleX(0.9691);">00:01:00</div>
<div class="t" style="left:375.88px;top:1226.71px;font-size:24.93px;font-weight:400;color:#2a2a2a;transform:scaleX(0.9842);">N/A</div>
<div class="t" style="left:29.54px;top:1282.56px;font-size:24.64px;font-weight:400;color:#2a2a2a;transform:scaleX(0.9491)">06</div>
<div class="t" style="left:63.95px;top:1282.56px;font-size:24.64px;font-weight:400;color:#2a2a2a;transform:scaleX(0.9631);">Nov,</div>
<div class="t" style="left:117.55px;top:1282.56px;font-size:24.64px;font-weight:400;color:#2a2a2a;">2018</div>
<div class="t" style="left:180.65px;top:1282.56px;font-size:24.64px;font-weight:400;color:#2a2a2a;transform:scaleX(0.9691);">00:03:00</div>
<div class="t" style="left:375.88px;top:1280.71px;font-size:24.93px;font-weight:400;color:#2a2a2a;transform:scaleX(0.9842);">N/A</div>
<div class="t" style="left:29.54px;top:1336.56px;font-size:24.64px;font-weight:400;color:#2a2a2a;transform:scaleX(0.9491)">06</div>
<div class="t" style="left:63.95px;top:1336.56px;font-size:24.64px;font-weight:400;color:#2a2a2a;transform:scaleX(0.9631);">Nov,</div>
<div class="t" style="left:117.55px;top:1336.56px;font-size:24.64px;font-weight:400;color:#2a2a2a;">2018</div>
<div class="t" style="left:180.65px;top:1336.56px;font-size:24.64px;font-weight:400;color:#2a2a2a;transform:scaleX(0.9691);">00:02:00</div>
<div class="t" style="left:375.88px;top:1334.71px;font-size:24.93px;font-weight:400;color:#2a2a2a;transform:scaleX(0.9842);">N/A</div>
<div class="t" style="left:29.54px;top:1390.56px;font-size:24.64px;font-weight:400;color:#2a2a2a;transform:scaleX(0.9491)">06</div>
<div class="t" style="left:63.95px;top:1390.56px;font-size:24.64px;font-weight:400;color:#2a2a2a;transform:scaleX(0.9631);">Nov,</div>
<div class="t" style="left:117.55px;top:1390.56px;font-size:24.64px;font-weight:400;color:#2a2a2a;">2018</div>
<div class="t" style="left:180.65px;top:1390.56px;font-size:24.64px;font-weight:400;color:#2a2a2a;transform:scaleX(0.9691);">00:01:00</div>
<div class="t" style="left:375.88px;top:1388.71px;font-size:24.93px;font-weight:400;color:#2a2a2a;transform:scaleX(0.9842);">N/A</div>
<div class="t" style="left:29.54px;top:1444.56px;font-size:24.64px;font-weight:400;color:#2a2a2a;transform:scaleX(0.9491)">05</div>
<div class="t" style="left:63.95px;top:1444.56px;font-size:24.64px;font-weight:400;color:#2a2a2a;transform:scaleX(0.9631);">Nov,</div>
<div class="t" style="left:117.55px;top:1444.56px;font-size:24.64px;font-weight:400;color:#2a2a2a;">2018</div>
<div class="t" style="left:180.65px;top:1444.56px;font-size:24.64px;font-weight:400;color:#2a2a2a;transform:scaleX(0.9691);">00:01:00</div>
<div class="t" style="left:375.88px;top:1442.71px;font-size:24.93px;font-weight:400;color:#2a2a2a;transform:scaleX(0.9842);">N/A</div>
<div class="t" style="left:29.54px;top:1498.56px;font-size:24.64px;font-weight:400;color:#2a2a2a;transform:scaleX(0.9491)">05</div>
<div class="t" style="left:63.95px;top:1498.56px;font-size:24.64px;font-weight:400;color:#2a2a2a;transform:scaleX(0.9631);">Nov,</div>
<div class="t" style="left:117.55px;top:1498.56px;font-size:24.64px;font-weight:400;color:#2a2a2a;">2018</div>
<div class="t" style="left:180.65px;top:1498.56px;font-size:24.64px;font-weight:400;color:#2a2a2a;transform:scaleX(0.9691);">00:01:00</div>
<div class="t" style="left:375.88px;top:1496.71px;font-size:24.93px;font-weight:400;color:#2a2a2a;transform:scaleX(0.9842);">N/A</div>
<div class="t" style="left:739.15px;top:17.33px;font-size:30.43px;font-weight:700;color:#4a8fe0;transform:scaleX(0.8934);">Create buckets</div>
<div class="t" style="left:734.55px;top:129.58px;font-size:30.72px;font-weight:400;color:#fff;transform:scaleX(0.9432);">Transform</div>
<div class="t" style="left:973.95px;top:129.58px;font-size:30.72px;font-weight:400;color:#777;transform:scaleX(0.9804);">Filters</div>
<div class="t" style="left:1165.09px;top:129.58px;font-size:30.72px;font-weight:400;color:#777;transform:scaleX(0.9515);">Sort</div>
<div class="t" style="left:679.68px;top:224.08px;font-size:26.38px;font-weight:700;color:#333;transform:scaleX(0.8775);">Columns to apply</div>
<div class="t" style="left:1217.72px;top:224.08px;font-size:26.38px;font-weight:700;color:#333;transform:scaleX(0.8976);">New column name</div>
<div class="t" style="left:693.11px;top:287.03px;font-size:24.20px;font-weight:400;color:#333;transform:scaleX(0.9610);">Created Time</div>
<div class="t" style="left:1233.50px;top:285.83px;font-size:24.20px;font-weight:400;color:#333;transform:scaleX(0.9663);">Created Time_bucket</div>
<div class="t" style="left:679.83px;top:421.03px;font-size:26.67px;font-weight:400;color:#333;transform:scaleX(0.9268);">Select bucket options</div>
<div class="t" style="left:693.80px;top:473.39px;font-size:25.07px;font-weight:400;color:#333;transform:scaleX(0.9330);">Week of the month</div>
<div class="t" style="left:689.85px;top:546.60px;font-size:25.65px;font-weight:400;color:#333;transform:scaleX(0.9566);">Create buckets using</div>
<div class="t" style="left:739.45px;top:595.73px;font-size:26.09px;font-weight:400;color:#333;transform:scaleX(0.9408);">Custom range</div>
<div class="t" style="left:739.85px;top:643.32px;font-size:25.51px;font-weight:400;color:#333;transform:scaleX(0.9375);">Specific values</div>
<div class="t" style="left:678.98px;top:793.06px;font-size:26.52px;font-weight:400;color:#333;transform:scaleX(0.9259);">Label for unmatched values</div>
<div class="t" style="left:698.05px;top:845.13px;font-size:24.20px;font-weight:400;color:#333;transform:scaleX(0.9774);">N/A</div>
<div class="t" style="left:679.78px;top:979.79px;font-size:26.96px;font-weight:400;color:#333;transform:scaleX(0.9684);">Condition</div>
<div class="t" style="left:1194.25px;top:980.28px;font-size:26.38px;font-weight:400;color:#333;transform:scaleX(0.9471);">Bucket label</div>
<div class="t" style="left:693.69px;top:1032.61px;font-size:24.93px;font-weight:400;color:#333;transform:scaleX(0.9804);">In</div>
<div class="t" style="left:870.80px;top:1035.98px;font-size:26.38px;font-weight:400;color:#111;transform:scaleX(0.9632);">4</div>
<div class="t" style="left:1001.93px;top:1035.98px;font-size:26.38px;font-weight:400;color:#111;transform:scaleX(0.9392);">3</div>
<div class="t" style="left:1212.96px;top:1032.00px;font-size:24.35px;font-weight:400;color:#333;transform:scaleX(0.9692);">Peak sales value</div>
<div class="t" style="left:717.70px;top:1476.04px;font-size:27.25px;font-weight:400;color:#333;transform:scaleX(0.9396);">Cancel</div>
<div class="t" style="left:916.40px;top:1476.04px;font-size:27.25px;font-weight:400;color:#fff;transform:scaleX(0.9288);">Apply</div>
<div class="t" style="left:1783.47px;top:29.07px;font-size:19.57px;font-weight:700;color:#111;transform:scaleX(0.8659);">?</div>
<div class="t" style="left:568.16px;top:20.18px;font-size:20.72px;font-weight:400;color:#fff;transform:scaleX(0.9862);">5</div>
<div class="t" style="left:517.84px;top:1399.90px;font-size:24.35px;font-weight:400;color:#fff;transform:scaleX(0.9449);">Top</div>
</div></body></html>
